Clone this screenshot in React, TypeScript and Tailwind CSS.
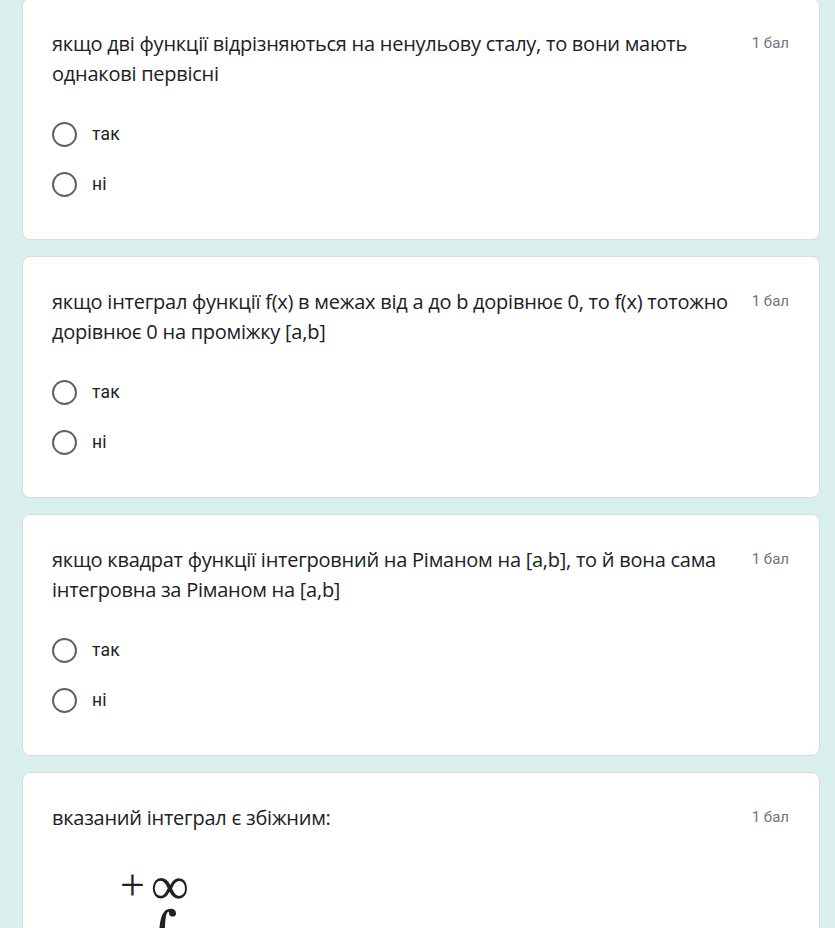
import React from 'react';

type Question = { id: number; title: string; options?: string[]; formula?: boolean };

const questions: Question[] = [
  { id: 1, title: 'якщо дві функції відрізняються на ненульову сталу, то вони мають однакові первісні', options: ['так', 'ні'] },
  { id: 2, title: 'якщо інтеграл функції f(x) в межах від a до b дорівнює 0, то f(x) тотожно дорівнює 0 на проміжку [a,b]', options: ['так', 'ні'] },
  { id: 3, title: 'якщо квадрат функції інтегровний на Ріманом на [a,b], то й вона сама інтегровна за Ріманом на [a,b]', options: ['так', 'ні'] },
  { id: 4, title: 'вказаний інтеграл є збіжним:', formula: true },
];

export default function App() {
  return (
    <div className="h-[928px] bg-[#d9efed] overflow-hidden">
      <div className="flex flex-col gap-4 pl-[22px] pr-[15px] -mt-[2px] pb-10">
        {questions.map(q => (
          <div key={q.id} className="bg-white border border-[#dadce0] rounded-[8px] pt-[30px] pb-[30px] pl-[29px] pr-[30px]">
            <div className="flex items-start">
              <div className="flex-1 text-[20px] leading-[30px] text-[#202124] font-['Open_Sans',sans-serif] tracking-[-0.25px]">
                {q.title}
              </div>
              <div className="ml-[12px] text-[15px] leading-[30px] text-[#70757a] font-['Roboto',sans-serif] -mt-[1px]">1 бал</div>
            </div>
            {q.options && (
              <div className="mt-[20px] flex flex-col">
                {q.options.map(o => (
                  <label key={o} className="flex items-center h-[50px]">
                    <span className="w-[25px] h-[25px] rounded-full border-[2.5px] border-[#5f6368] box-border" />
                    <span className="ml-[15px] text-[17.5px] text-[#202124] font-['Roboto',sans-serif] tracking-[0.2px]">{o}</span>
                  </label>
                ))}
              </div>
            )}
            {q.formula && (
              <div className="mt-[36px] ml-[68px] h-[120px] text-[#202124] font-['Liberation_Serif',serif]">
                <div className="flex items-center h-[34px]">
                  <span className="text-[44px] leading-[34px] font-light">+</span>
                  <span className="ml-[6px] text-[54px] leading-[34px]">∞</span>
                </div>
                <div className="ml-[26px] text-[60px] leading-[60px] italic font-['DejaVu_Serif',serif]">∫</div>
              </div>
            )}
          </div>
        ))}
      </div>
    </div>
  );
}
